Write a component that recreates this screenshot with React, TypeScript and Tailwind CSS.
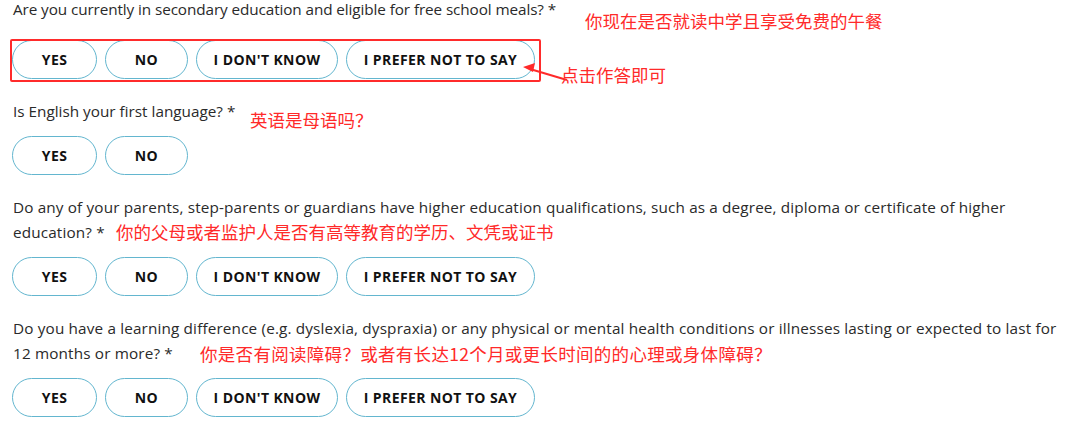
import React from "react";

const Btn = ({ label, w }: { label: string; w: string }) => (
  <button
    className={`${w} h-[39px] rounded-full border-[1.5px] border-[#63b6cf] bg-white text-[14px] font-bold tracking-[0.4px] text-[#111] flex items-center justify-center`}
  >
    {label}
  </button>
);

const Row4 = () => (
  <div className="flex gap-2">
    <Btn label="YES" w="w-[85px]" />
    <Btn label="NO" w="w-[83px]" />
    <Btn label="I DON'T KNOW" w="w-[142px]" />
    <Btn label="I PREFER NOT TO SAY" w="w-[189px]" />
  </div>
);

const Note = ({ children, cls }: { children: React.ReactNode; cls: string }) => (
  <span
    className={`absolute whitespace-nowrap text-[17.5px] leading-none text-[#ff2a2a] ${cls}`}
    style={{ fontFamily: '"Noto Sans CJK SC", "Noto Sans", sans-serif' }}
  >
    {children}
  </span>
);

export default function App() {
  return (
    <div
      className="relative w-[1080px] h-[443px] bg-white overflow-hidden pl-[12px] text-[#2a2a2a]"
      style={{ fontFamily: '"Open Sans", "Noto Sans", sans-serif' }}
    >
      {/* Q1 */}
      <div className="relative">
        <p className="-mt-[3px] text-[15.3px] tracking-[-0.1px] leading-[25px] whitespace-nowrap pl-[1px]">
          Are you currently in secondary education and eligible for free school meals? *
        </p>
        <div className="relative mt-[18px]">
          <Row4 />
          <div className="absolute left-[-2px] top-[-1px] w-[531px] h-[43px] border-2 border-[#ff2b2b] rounded-[2px]" />
        </div>
        <Note cls="left-[573px] top-[15px]">你现在是否就读中学且享受免费的午餐</Note>
        <Note cls="left-[549px] top-[69px]">点击作答即可</Note>
        <svg className="absolute left-[500px] top-[55px]" width="60" height="40" viewBox="0 0 60 40">
          <line x1="55" y1="28" x2="18" y2="17" stroke="#ff2a2a" strokeWidth="2" />
          <polygon points="11,15 23,11 21,20" fill="#ff2a2a" />
        </svg>
      </div>

      {/* Q2 */}
      <div className="relative mt-[20px]">
        <p className="text-[15.3px] leading-[25px] whitespace-nowrap pl-[1px]">
          Is English your first language? *
        </p>
        <Note cls="left-[238px] top-[12px]">英语是母语吗？</Note>
        <div className="mt-[12px] flex gap-2">
          <Btn label="YES" w="w-[85px]" />
          <Btn label="NO" w="w-[83px]" />
        </div>
      </div>

      {/* Q3 */}
      <div className="relative mt-[20px]">
        <p className="text-[15.3px] tracking-[0.14px] leading-[25px] whitespace-nowrap pl-[1px]">
          Do any of your parents, step-parents or guardians have higher education qualifications, such as a degree, diploma or certificate of higher
          <br />
          education? *
        </p>
        <Note cls="left-[104px] top-[28px]">你的父母或者监护人是否有高等教育的学历、文凭或证书</Note>
        <div className="mt-[12px]">
          <Row4 />
        </div>
      </div>

      {/* Q4 */}
      <div className="relative mt-[20px]">
        <p className="text-[15.3px] tracking-[0.15px] leading-[25px] whitespace-nowrap pl-[1px]">
          Do you have a learning difference (e.g. dyslexia, dyspraxia) or any physical or mental health conditions or illnesses lasting or expected to last for
          <br />
          12 months or more? *
        </p>
        <Note cls="left-[188px] top-[29px] tracking-[0.3px]">你是否有阅读障碍？或者有长达12个月或更长时间的的心理或身体障碍？</Note>
        <div className="mt-[12px]">
          <Row4 />
        </div>
      </div>
    </div>
  );
}
